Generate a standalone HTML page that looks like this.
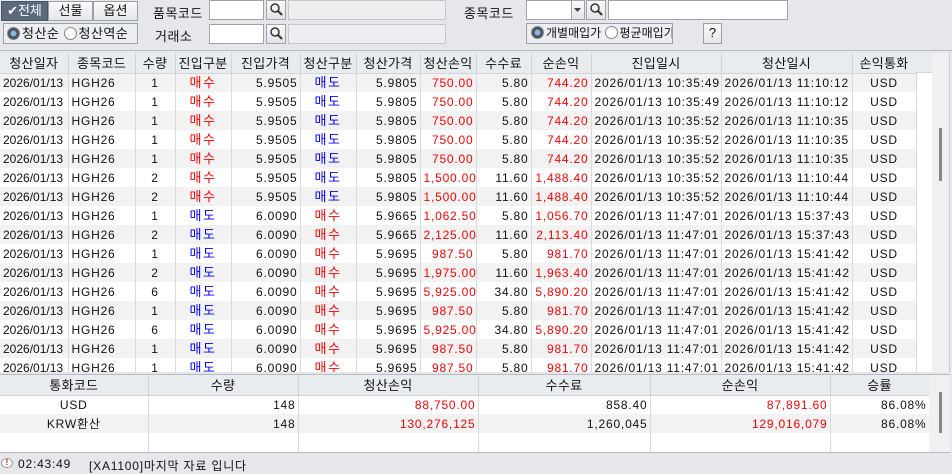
<!DOCTYPE html>
<html><head><meta charset="utf-8">
<style>
*{box-sizing:border-box;margin:0;padding:0}
body{width:952px;height:473px;background:#e5e7eb;font-family:"Liberation Sans","Noto Sans CJK KR",sans-serif;font-size:12px;color:#111;position:relative;overflow:hidden}
.a{position:absolute}
.btn{position:absolute;border:1px solid #9aa0a8;background:linear-gradient(#fafafa,#e4e6ea);text-align:center;line-height:18px;font-size:13px;white-space:nowrap;overflow:hidden}
.inp{position:absolute;background:#fff;border:1px solid #a0a4aa;height:20px}
.dis{position:absolute;background:#eceef0;border:1px solid #c4c7cc;height:20px}
.lbl{position:absolute;font-size:13px;letter-spacing:.5px;white-space:nowrap}
.srch{position:absolute;width:20px;height:20px;border:1px solid #a0a4aa;background:linear-gradient(#fafafa,#e2e4e8)}
table{border-collapse:collapse;table-layout:fixed;position:absolute}
td{height:19px;line-height:18px;padding:0 3px;border-right:1px solid #d8dadd;white-space:nowrap;overflow:hidden;font-size:12px;letter-spacing:.8px}
td.r{padding-right:2px}
td.d{letter-spacing:0;padding:0 3px}
th{height:20px;font-weight:normal;background:#e9ecef;border-right:1px solid #d0d3d7;border-bottom:1px solid #d0d3d7;font-size:13px;letter-spacing:.3px;white-space:nowrap;overflow:hidden}
tr:nth-child(odd) td{background:#f2f2f2}
tr:nth-child(even) td{background:#fff}
.r{text-align:right}.c{text-align:center}.red{color:#f00}.blue{color:#00f}
.k{font-size:13px;letter-spacing:1.5px}
.radio{display:inline-block;width:13px;height:13px;border-radius:50%;border:1px solid #888;background:#fff;vertical-align:-2px;margin-right:2px}
.radio.on{background:radial-gradient(#8fb6e0 30%,#4a5360 45%)}
</style></head><body>
<div class="btn" style="left:1px;top:1px;width:47px;height:20px;background:#5d6a7c;color:#fff;border-color:#4a5566">✔전체</div>
<div class="btn" style="left:48px;top:1px;width:45px;height:20px">선물</div>
<div class="btn" style="left:93px;top:1px;width:45px;height:20px">옵션</div>
<div class="lbl" style="left:153px;top:3px">품목코드</div>
<div class="inp" style="left:209px;top:0px;width:55px"></div>
<div class="srch" style="left:266px;top:0px"><svg width="18" height="18"><circle cx="8" cy="7" r="4" fill="none" stroke="#333" stroke-width="1.5"/><path d="M11 10l4 4" stroke="#333" stroke-width="2"/></svg></div>
<div class="dis" style="left:288px;top:0px;width:158px"></div>
<div class="lbl" style="left:464px;top:3px">종목코드</div>
<div class="inp" style="left:526px;top:0px;width:46px"></div>
<div class="srch" style="left:571px;top:0px;width:14px"><svg width="12" height="18"><path d="M2 7h7l-3.5 4z" fill="#444"/></svg></div>
<div class="srch" style="left:586px;top:0px"><svg width="18" height="18"><circle cx="8" cy="7" r="4" fill="none" stroke="#333" stroke-width="1.5"/><path d="M11 10l4 4" stroke="#333" stroke-width="2"/></svg></div>
<div class="inp" style="left:608px;top:0px;width:180px"></div>
<div class="btn" style="left:3px;top:23px;width:135px;height:21px;line-height:19px;text-align:left;padding-left:3px;background:#eceef1;letter-spacing:.5px"><span class="radio on"></span>청산순 <span class="radio"></span>청산역순</div>
<div class="lbl" style="left:155px;top:26px">거래소</div>
<div class="inp" style="left:209px;top:24px;width:55px"></div>
<div class="srch" style="left:266px;top:24px"><svg width="18" height="18"><circle cx="8" cy="7" r="4" fill="none" stroke="#333" stroke-width="1.5"/><path d="M11 10l4 4" stroke="#333" stroke-width="2"/></svg></div>
<div class="dis" style="left:288px;top:24px;width:158px"></div>
<div class="btn" style="left:526px;top:23px;width:147px;height:21px;line-height:19px;text-align:left;padding-left:4px;background:#eceef1;font-size:12px;letter-spacing:0"><span class="radio on"></span>개별매입가 <span class="radio"></span>평균매입가</div>
<div class="btn" style="left:703px;top:23px;width:19px;height:21px">?</div>
<div class="a" style="left:0;top:50px;width:952px;height:1px;background:#b8bcc2"></div>
<div class="a" style="left:0;top:53px;width:950px;height:319px;background:#fff;border-right:1px solid #c8cbd0;overflow:hidden">
<table style="left:0;top:0;width:916px">
<colgroup><col style="width:68px"><col style="width:67px"><col style="width:40px"><col style="width:56px"><col style="width:69px"><col style="width:56px"><col style="width:64px"><col style="width:56px"><col style="width:55px"><col style="width:60px"><col style="width:130px"><col style="width:131px"><col style="width:64px"></colgroup>
<thead><tr><th>청산일자</th><th>종목코드</th><th>수량</th><th>진입구분</th><th>진입가격</th><th>청산구분</th><th>청산가격</th><th>청산손익</th><th>수수료</th><th>순손익</th><th>진입일시</th><th>청산일시</th><th>손익통화</th></tr></thead>
<tbody id="tb"></tbody></table>
<div class="a" style="left:916px;top:0;width:16px;height:20px;background:#e9ecef;border-bottom:1px solid #d0d3d7"></div>
<div class="a" style="left:932px;top:0;width:18px;height:319px;background:#eef0f2"></div>
<div class="a" style="left:939px;top:75px;width:3px;height:53px;background:#888"></div>
</div>
<div class="a" style="left:0;top:374px;width:950px;height:79px;background:#fff;border-top:1px solid #b8bcc2;border-bottom:1px solid #b8bcc2;overflow:hidden">
<table style="left:0;top:0;width:929px">
<colgroup><col style="width:148px"><col style="width:150px"><col style="width:180px"><col style="width:172px"><col style="width:180px"><col style="width:99px"></colgroup>
<thead><tr><th>통화코드</th><th>수량</th><th>청산손익</th><th>수수료</th><th>순손익</th><th>승률</th></tr></thead>
<tbody>
<tr><td class="c" style="background:#fff">USD</td><td class="r" style="background:#fff">148</td><td class="r red" style="background:#fff">88,750.00</td><td class="r" style="background:#fff">858.40</td><td class="r red" style="background:#fff">87,891.60</td><td class="r" style="background:#fff">86.08%</td></tr>
<tr><td class="c" style="background:#f2f2f2">KRW환산</td><td class="r" style="background:#f2f2f2">148</td><td class="r red" style="background:#f2f2f2">130,276,125</td><td class="r" style="background:#f2f2f2">1,260,045</td><td class="r red" style="background:#f2f2f2">129,016,079</td><td class="r" style="background:#f2f2f2">86.08%</td></tr>
<tr><td style="background:#fff;height:20px"></td><td style="background:#fff"></td><td style="background:#fff"></td><td style="background:#fff"></td><td style="background:#fff"></td><td style="background:#fff"></td></tr>
</tbody></table>
<div class="a" style="left:929px;top:0;width:21px;height:79px;background:#eef0f2"></div>
<div class="a" style="left:939px;top:17px;width:3px;height:41px;background:#888"></div>
</div>
<div class="a" style="left:1px;top:458px;width:12px;height:10px;border-radius:50%;background:#fff;border:1px solid #999;color:#e00;font-size:8px;line-height:8px;text-align:center;font-weight:bold">!</div>
<div class="lbl" style="left:18px;top:457px;font-size:12px;letter-spacing:.8px">02:43:49</div>
<div class="lbl" style="left:89px;top:457px;font-size:12px;letter-spacing:.8px">[XA1100]마지막 자료 입니다</div>
<script>
var rows=[
[1,'매수','5.9505','매도','5.9805','750.00','5.80','744.20','10:35:49','11:10:12'],
[1,'매수','5.9505','매도','5.9805','750.00','5.80','744.20','10:35:49','11:10:12'],
[1,'매수','5.9505','매도','5.9805','750.00','5.80','744.20','10:35:52','11:10:35'],
[1,'매수','5.9505','매도','5.9805','750.00','5.80','744.20','10:35:52','11:10:35'],
[1,'매수','5.9505','매도','5.9805','750.00','5.80','744.20','10:35:52','11:10:35'],
[2,'매수','5.9505','매도','5.9805','1,500.00','11.60','1,488.40','10:35:52','11:10:44'],
[2,'매수','5.9505','매도','5.9805','1,500.00','11.60','1,488.40','10:35:52','11:10:44'],
[1,'매도','6.0090','매수','5.9665','1,062.50','5.80','1,056.70','11:47:01','15:37:43'],
[2,'매도','6.0090','매수','5.9665','2,125.00','11.60','2,113.40','11:47:01','15:37:43'],
[1,'매도','6.0090','매수','5.9695','987.50','5.80','981.70','11:47:01','15:41:42'],
[2,'매도','6.0090','매수','5.9695','1,975.00','11.60','1,963.40','11:47:01','15:41:42'],
[6,'매도','6.0090','매수','5.9695','5,925.00','34.80','5,890.20','11:47:01','15:41:42'],
[1,'매도','6.0090','매수','5.9695','987.50','5.80','981.70','11:47:01','15:41:42'],
[6,'매도','6.0090','매수','5.9695','5,925.00','34.80','5,890.20','11:47:01','15:41:42'],
[1,'매도','6.0090','매수','5.9695','987.50','5.80','981.70','11:47:01','15:41:42'],
[1,'매도','6.0090','매수','5.9695','987.50','5.80','981.70','11:47:01','15:41:42']];
var h='';
rows.forEach(function(r){
 var col=function(s){return s=='매수'?'red':'blue'};
 h+='<tr><td class="d">2026/01/13</td><td>HGH26</td><td class="c">'+r[0]+'</td><td class="c k '+col(r[1])+'">'+r[1]+'</td><td class="r">'+r[2]+'</td><td class="c k '+col(r[3])+'">'+r[3]+'</td><td class="r">'+r[4]+'</td><td class="r red">'+r[5]+'</td><td class="r">'+r[6]+'</td><td class="r red">'+r[7]+'</td><td>2026/01/13 '+r[8]+'</td><td>2026/01/13 '+r[9]+'</td><td class="c">USD</td></tr>';
});
document.getElementById('tb').innerHTML=h;
</script>
</body></html>
